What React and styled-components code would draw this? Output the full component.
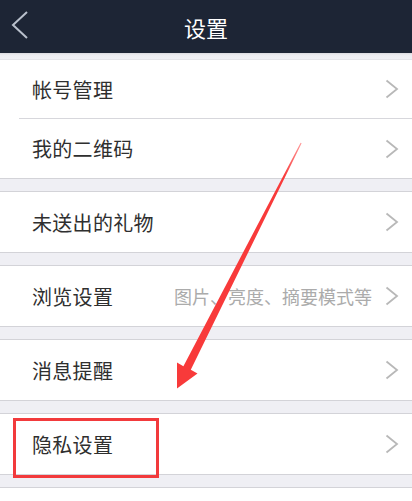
import React from "react";
import styled, { createGlobalStyle } from "styled-components";

const Global = createGlobalStyle`
  html, body { margin: 0; padding: 0; }
  body {
    background: #efeff4;
    font-family: "Noto Sans CJK SC", "Noto Sans", sans-serif;
    overflow: hidden;
  }
`;

const Page = styled.div`
  position: relative;
  width: 412px;
  height: 501px;
  overflow: hidden;
  background: #efeff4;
`;

const Header = styled.header`
  height: 53px;
  background: #1d2535;
  display: flex;
  align-items: center;
  justify-content: center;
  position: relative;
`;

const BackBtn = styled.svg`
  position: absolute;
  left: 10px;
  top: 10px;
`;

const Title = styled.h1`
  margin: 0;
  color: #ffffff;
  font-size: 22px;
  font-weight: 400;
  line-height: 1;
`;

const Band = styled.div`
  height: 6px;
  background: linear-gradient(#d9d9de, #ececf0 2px, #efeff4);
  border-bottom: 1px solid #e4e4e8;
`;

const List = styled.div`
  display: flex;
  flex-direction: column;
  gap: 12px;
`;

const Group = styled.section`
  background: #fff;
  border-bottom: ${(p) => (p.$last ? "none" : "1px solid #d3d3d8")};
  border-top: ${(p) => (p.$first ? "none" : "1px solid #d3d3d8")};
  min-height: ${(p) => (p.$last ? "40px" : "0")};
  display: flex;
  flex-direction: column;
`;

const Row = styled.div`
  height: ${(p) => p.$h || 60}px;
  display: flex;
  align-items: center;
  padding: 0 13px 0 32px;
  box-sizing: border-box;
`;

const Sep = styled.div`
  height: 1px;
  margin-left: 19px;
  background: #d7d7dc;
`;

const Label = styled.span`
  flex: 1;
  font-size: 20px;
  color: #2f2f2f;
  letter-spacing: 0.3px;
`;

const Hint = styled.span`
  font-size: 18px;
  color: #ababab;
  margin-right: 13px;
`;

const Overlay = styled.svg`
  position: absolute;
  left: 0;
  top: 0;
  pointer-events: none;
`;

const Highlight = styled.div`
  position: absolute;
  left: 13px;
  top: 418px;
  width: 146px;
  height: 60px;
  border: 3px solid #f23a3c;
  box-sizing: border-box;
`;

const Chevron = () => (
  <svg width="14" height="20" viewBox="0 0 14 20">
    <polyline points="1.5,1.5 12,10 1.5,18.5" fill="none" stroke="#b8b8b8" strokeWidth="1.8" />
  </svg>
);

const Item = ({ label, hint, h }) => (
  <Row $h={h}>
    <Label>{label}</Label>
    {hint && <Hint>{hint}</Hint>}
    <Chevron />
  </Row>
);

export default function App() {
  return (
    <Page>
      <Global />
      <Header>
        <BackBtn width="20" height="32" viewBox="0 0 20 32">
          <polyline points="17,2 3,15 17,28" fill="none" stroke="#b9c0cc" strokeWidth="2" />
        </BackBtn>
        <Title>设置</Title>
      </Header>
      <Band />
      <List>
        <Group $first>
          <Item label="帐号管理" h={58} />
          <Sep />
          <Item label="我的二维码" h={59} />
        </Group>
        <Group>
          <Item label="未送出的礼物" />
        </Group>
        <Group>
          <Item label="浏览设置" hint="图片、亮度、摘要模式等" />
        </Group>
        <Group>
          <Item label="消息提醒" />
        </Group>
        <Group>
          <Item label="隐私设置" />
        </Group>
        <Group $last />
      </List>
      <Overlay width="412" height="501" viewBox="0 0 412 501">
        <defs>
          <linearGradient id="ag" x1="301" y1="143" x2="186" y2="370" gradientUnits="userSpaceOnUse">
            <stop offset="0" stopColor="#ff9a9a" />
            <stop offset="0.15" stopColor="#f83a3a" />
            <stop offset="1" stopColor="#f83a3a" />
          </linearGradient>
        </defs>
        <polygon
          points="301.6,143.2 190.8,369.8 197.5,373.5 177,388.5 177,362.5 183.4,366.2 300.6,142.8"
          fill="url(#ag)"
        />
      </Overlay>
      <Highlight />
    </Page>
  );
}
